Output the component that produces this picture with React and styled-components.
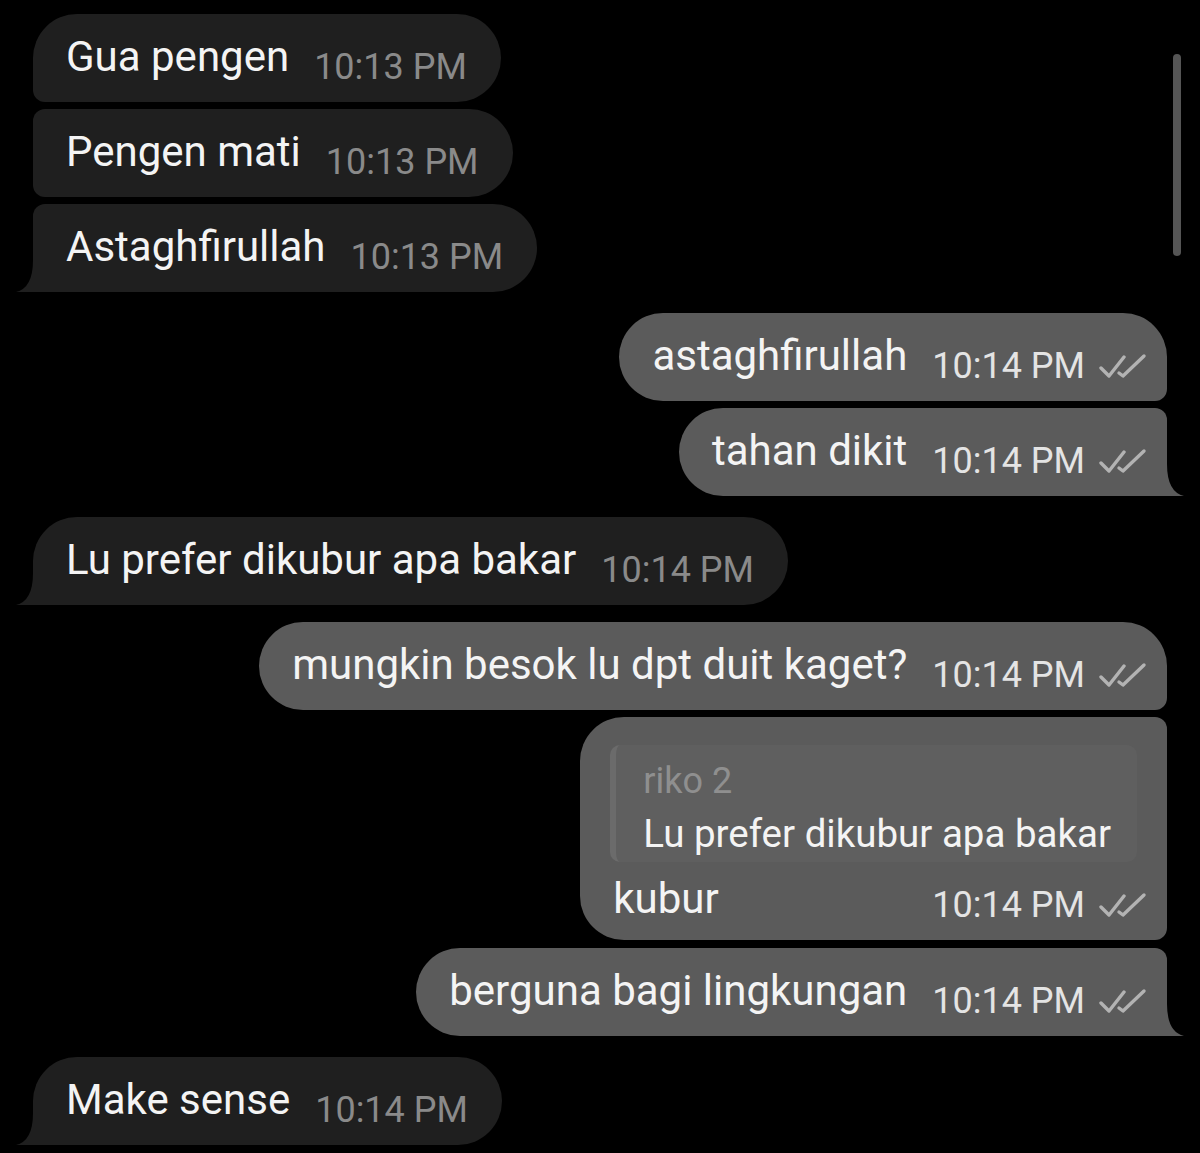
import React from "react"
import styled, { createGlobalStyle } from "styled-components"

const GlobalStyle = createGlobalStyle`
	html, body {
		margin: 0;
		padding: 0;
		background: #000;
	}
	body {
		font-family: Roboto, "Noto Sans", "Liberation Sans", sans-serif;
		-webkit-font-smoothing: antialiased;
	}
`

const BIG = 44
const SMALL = 12

const Screen = styled.div`
	position: relative;
	width: 1200px;
	height: 1153px;
	overflow: hidden;
	background: #000;
	padding: 14px 33px 0 33px;
	box-sizing: border-box;
	display: flex;
	flex-direction: column;
`

const ScrollThumb = styled.div`
	position: absolute;
	top: 54px;
	right: 19px;
	width: 8px;
	height: 202px;
	border-radius: 4px;
	background: #555;
`

const Row = styled.div`
	display: flex;
	justify-content: ${props => props.$out ? "flex-end" : "flex-start"};
	margin-top: ${props => props.$gap || 0}px;
`

const Bubble = styled.div`
	position: relative;
	display: flex;
	align-items: flex-end;
	min-height: 88px;
	box-sizing: border-box;
	padding: ${props => props.$out ? "0 20px 0 33px" : "0 34px 0 33px"};
	background: ${props => props.$out ? "#5b5b5b" : "#1f1f1f"};
	border-radius: ${props => props.$radius};
`

const Text = styled.span`
	color: #f4f4f4;
	font-size: 42px;
	line-height: 1;
	padding-bottom: 24px;
	white-space: nowrap;
`

const Meta = styled.span`
	display: flex;
	align-items: center;
	gap: 14px;
	margin-left: 25px;
	padding-bottom: 17px;
	color: ${props => props.$out ? "#e4e4e4" : "#8a8a8a"};
	font-size: 36px;
	line-height: 1;
	white-space: nowrap;
`

const Tail = styled.svg`
	position: absolute;
	bottom: 0;
	${props => props.$out ? "right: -17px;" : "left: -17px;"}
	width: 18px;
	height: 32px;
`

const ReplyBubble = styled(Bubble)`
	flex-direction: column;
	align-items: stretch;
	padding: 28px 20px 0 30px;
`

const Quote = styled.div`
	display: flex;
	flex-direction: column;
	margin-right: 10px;
	padding: 18px 26px 8px 27px;
	border-radius: 10px;
	background: #5f5f5f;
	border-left: 6px solid #6b6b6b;
`

const QuoteName = styled.span`
	color: #8f8f8f;
	font-size: 36px;
	line-height: 1;
	margin-bottom: 16px;
`

const QuoteText = styled.span`
	color: #f4f4f4;
	font-size: 38.5px;
	line-height: 1;
	white-space: nowrap;
`

const ReplyFoot = styled.div`
	display: flex;
	align-items: flex-end;
	justify-content: space-between;
	padding-left: 3px;
`

const ReplyText = styled(Text)`
	padding-bottom: 20px;
	margin-top: 16px;
`

const Ticks = () => (
	<svg width="48" height="26" viewBox="0 0 48 26" fill="none" stroke="#b3b3b3" strokeWidth="3.4" strokeLinecap="round" strokeLinejoin="round">
		<polyline points="2,15 10,23 25,4" />
		<polyline points="20,20 24,23 45,3" />
	</svg>
)

const TailShape = ({ out, color }) => (
	<Tail $out={out} viewBox="0 0 18 32">
		{out
			? <path d="M0 0 L1 0 Q1 28 18 32 L0 32 Z" fill={color} />
			: <path d="M18 0 L17 0 Q17 28 0 32 L18 32 Z" fill={color} />}
	</Tail>
)

const radius = (out, top, bottom) => {
	const t = top ? BIG : SMALL
	const b = bottom === "tail" ? 0 : bottom ? BIG : SMALL
	if (out) return `${BIG}px ${t}px ${b}px ${BIG}px`
	return `${t}px ${BIG}px ${BIG}px ${b}px`
}

const messages = [
	{ text: "Gua pengen", time: "10:13 PM", top: true, bottom: false, gap: 0 },
	{ text: "Pengen mati", time: "10:13 PM", top: false, bottom: false, gap: 7 },
	{ text: "Astaghfirullah", time: "10:13 PM", top: false, bottom: "tail", gap: 7 },
	{ out: true, text: "astaghfirullah", time: "10:14 PM", top: true, bottom: false, gap: 21 },
	{ out: true, text: "tahan dikit", time: "10:14 PM", top: false, bottom: "tail", gap: 7 },
	{ text: "Lu prefer dikubur apa bakar", time: "10:14 PM", top: true, bottom: "tail", gap: 21 },
	{ out: true, text: "mungkin besok lu dpt duit kaget?", time: "10:14 PM", top: true, bottom: false, gap: 17 },
	{ out: true, reply: { name: "riko 2", text: "Lu prefer dikubur apa bakar" }, text: "kubur", time: "10:14 PM", top: false, bottom: false, gap: 7 },
	{ out: true, text: "berguna bagi lingkungan", time: "10:14 PM", top: false, bottom: "tail", gap: 8 },
	{ text: "Make sense", time: "10:14 PM", top: true, bottom: "tail", gap: 21 },
]

const MetaInfo = ({ out, time }) => (
	<Meta $out={out}>
		{time}
		{out && <Ticks />}
	</Meta>
)

const Message = ({ msg }) => {
	const r = radius(msg.out, msg.top, msg.bottom)
	const color = msg.out ? "#5b5b5b" : "#1f1f1f"

	if (msg.reply) {
		return (
			<Row $out={msg.out} $gap={msg.gap}>
				<ReplyBubble $out={msg.out} $radius={r}>
					<Quote>
						<QuoteName>{msg.reply.name}</QuoteName>
						<QuoteText>{msg.reply.text}</QuoteText>
					</Quote>
					<ReplyFoot>
						<ReplyText>{msg.text}</ReplyText>
						<MetaInfo out={msg.out} time={msg.time} />
					</ReplyFoot>
				</ReplyBubble>
			</Row>
		)
	}

	return (
		<Row $out={msg.out} $gap={msg.gap}>
			<Bubble $out={msg.out} $radius={r}>
				<Text>{msg.text}</Text>
				<MetaInfo out={msg.out} time={msg.time} />
				{msg.bottom === "tail" && <TailShape out={msg.out} color={color} />}
			</Bubble>
		</Row>
	)
}

export default function App() {
	return (
		<Screen>
			<GlobalStyle />
			{messages.map((m, i) => <Message key={i} msg={m} />)}
			<ScrollThumb />
		</Screen>
	)
}
